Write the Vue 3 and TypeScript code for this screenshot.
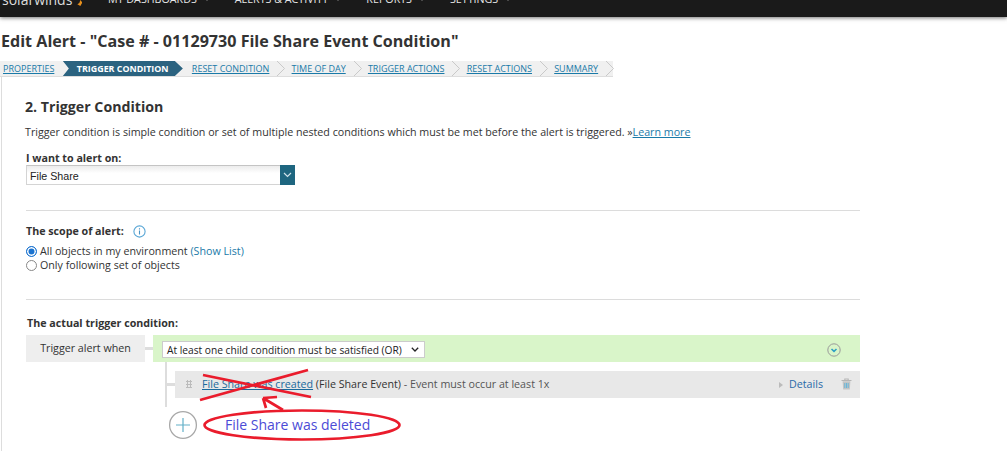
<script setup lang="ts">
const nav = ['MY DASHBOARDS', 'ALERTS & ACTIVITY', 'REPORTS', 'SETTINGS'];

interface Step {
  label: string;
  active?: boolean;
}

const steps: Step[] = [
  { label: 'PROPERTIES' },
  { label: 'TRIGGER CONDITION', active: true },
  { label: 'RESET CONDITION' },
  { label: 'TIME OF DAY' },
  { label: 'TRIGGER ACTIONS' },
  { label: 'RESET ACTIONS' },
  { label: 'SUMMARY' },
];
</script>

<template>
  <div class="page">
    <header class="topbar">
      <div class="logo">solarwinds<span class="flame"></span></div>
      <nav class="menu">
        <span v-for="item in nav" :key="item" class="menu-item">{{ item }}<i class="caret"></i></span>
      </nav>
    </header>

    <h1 class="title">Edit Alert - "Case # - 01129730 File Share Event Condition"</h1>

    <div class="steps">
      <div v-for="step in steps" :key="step.label" class="step" :class="{ active: step.active }">
        <a class="step-link">{{ step.label }}</a>
        <svg v-if="!step.active" class="chev" width="10" height="15" viewBox="0 0 10 15">
          <path d="M1 0 L8.5 7.5 L1 15" fill="none" stroke="#c9c9c9" stroke-width="1" />
        </svg>
      </div>
    </div>

    <main class="panel">
      <h2 class="heading">2. Trigger Condition</h2>
      <p class="intro">
        Trigger condition is simple condition or set of multiple nested conditions which must be met before the alert is triggered. »<a class="link underline">Learn more</a>
      </p>

      <div class="label label-first">I want to alert on:</div>
      <div class="combo">
        <span class="combo-value">File Share</span>
        <span class="combo-btn">
          <svg width="9" height="6" viewBox="0 0 9 6"><path d="M1 1 L4.5 4.5 L8 1" fill="none" stroke="#cfe3ea" stroke-width="1.2" /></svg>
        </span>
      </div>

      <hr class="rule rule-one" />

      <div class="label scope-label">
        The scope of alert:
        <svg class="info" width="13" height="13" viewBox="0 0 13 13">
          <circle cx="6.5" cy="6.5" r="5.6" fill="none" stroke="#5aa7d6" stroke-width="1.1" />
          <path d="M6.5 5.6 V9.6 M6.5 3.3 V4.5" stroke="#4a94c4" stroke-width="1.1" />
        </svg>
      </div>
      <div class="radios">
        <div class="radio-row"><span class="radio on"></span>All objects in my environment <a class="link">(Show List)</a></div>
        <div class="radio-row"><span class="radio"></span>Only following set of objects</div>
      </div>

      <hr class="rule rule-two" />

      <div class="label actual-label">The actual trigger condition:</div>
      <div class="when-row">
        <div class="when-box">Trigger alert when</div>
        <div class="connector"></div>
        <div class="green">
          <div class="or-select">
            <span>At least one child condition must be satisfied (OR)</span>
            <svg width="8" height="5" viewBox="0 0 8 5"><path d="M0.8 0.8 L4 4 L7.2 0.8" fill="none" stroke="#222" stroke-width="1.3" /></svg>
          </div>
          <svg class="collapse" width="14" height="14" viewBox="0 0 14 14">
            <circle cx="7" cy="7" r="6.2" fill="none" stroke="#999" stroke-width="1" />
            <path d="M4.5 6 L7 8.4 L9.5 6" fill="none" stroke="#2c9fc4" stroke-width="1.5" />
          </svg>
        </div>
      </div>

      <div class="children">
        <div class="child-row">
          <div class="child-stub"></div>
          <div class="child">
            <span class="grip"></span>
            <a class="link underline cond">File Share was created</a>
            <span class="cond-rest">&nbsp;(File Share Event)<span class="muted"> - Event must occur at least 1x</span></span>
            <span class="details"><i class="tri"></i><a class="link-dark">Details</a></span>
            <svg class="trash" width="11" height="12" viewBox="0 0 11 12">
              <path d="M0.5 2.5 H10.5 M3.8 2.3 V1 H7.2 V2.3" fill="none" stroke="#b5b5b5" stroke-width="1.1" />
              <path d="M1.6 3.2 H9.4 L8.8 11.5 H2.2 Z" fill="#c4c4c4" />
              <path d="M3.8 5 V10 M5.5 5 V10 M7.2 5 V10" stroke="#5fb6dc" stroke-width="0.9" />
            </svg>
          </div>
        </div>
        <div class="add-row">
          <svg width="30" height="30" viewBox="0 0 30 30">
            <circle cx="15" cy="15" r="13.4" fill="#fff" stroke="#a8a8a8" stroke-width="1.3" />
            <path d="M15 8 V22 M8 15 H22" stroke="#62b0c8" stroke-width="1.2" />
          </svg>
          <span class="note">File Share was deleted</span>
        </div>
      </div>
    </main>

    <svg class="marks" width="1007" height="451" viewBox="0 0 1007 451">
      <g fill="none" stroke="#ea1c2c" stroke-width="2.7">
        <path d="M200 400 L308 370" />
        <path d="M203 375 L311 397" />
        <path d="M283 410 L263 398 M263 398 L277 397 M263 398 L266 408" />
        <ellipse cx="302" cy="425" rx="97.5" ry="14.5" />
      </g>
    </svg>
  </div>
</template>

<style>
html, body {
  margin: 0;
  background: #fff;
}
</style>

<style scoped>
.page {
  position: relative;
  width: 1007px;
  height: 451px;
  overflow: hidden;
  background: #fff;
  font-family: "Open Sans", "Liberation Sans", sans-serif;
  font-size: 10.7px;
  color: #333;
}

.topbar {
  display: flex;
  align-items: flex-end;
  height: 17px;
  background: #1a1a1a;
  box-shadow: 0 1px 4px rgba(0, 0, 0, 0.55);
  overflow: hidden;
  color: #e6e6e6;
}

.logo {
  display: flex;
  align-items: center;
  flex: none;
  width: 108px;
  height: 20px;
  margin-bottom: 7px;
  padding-left: 2px;
  box-sizing: border-box;
  font-size: 14px;
  line-height: 20px;
  color: #ddd;
}

.flame {
  width: 5px;
  height: 6px;
  margin-left: 5px;
  margin-top: 6px;
  background: #e8901c;
  clip-path: polygon(60% 0, 100% 40%, 60% 100%, 0 70%, 40% 50%);
}

.menu {
  display: flex;
  gap: 26px;
  height: 16px;
  margin-bottom: 10px;
  font-size: 10.7px;
  line-height: 16px;
}

.menu-item {
  display: flex;
  align-items: center;
  gap: 8px;
}

.caret {
  width: 0;
  height: 0;
  margin-top: 2px;
  border-left: 2px solid transparent;
  border-right: 2px solid transparent;
  border-top: 2px solid #777;
}

.title {
  margin: 14px 0 0 1px;
  font-size: 16.1px;
  line-height: 20px;
  font-weight: 700;
  color: #333;
}

.steps {
  display: flex;
  align-items: center;
  width: 613px;
  height: 15px;
  margin-top: 10px;
  background: #f0f0f0;
  border-bottom: 1px solid #ddd;
  font-size: 9px;
}

.step {
  display: flex;
  flex: none;
  align-items: center;
  height: 15px;
  margin-right: 5.2px;
}

.step:first-child {
  padding-left: 3px;
  margin-right: 0;
}

.step-link {
  color: #1a7aa8;
  text-decoration: underline;
  white-space: nowrap;
}

.chev {
  flex: none;
  margin-left: 7px;
}

.step:first-child .chev {
  display: none;
}

.step.active {
  margin-left: 8.5px;
  margin-right: 9px;
  width: 120px;
  padding-left: 14px;
  box-sizing: border-box;
  background: #2b6380;
  font-size: 8.9px;
  clip-path: polygon(0 0, 112px 0, 120px 50%, 112px 100%, 0 100%, 6px 50%);
}

.step.active .step-link {
  color: #fff;
  font-weight: 700;
  text-decoration: none;
}

.panel {
  height: 374px;
  margin-left: 1px;
  padding: 21px 0 0 23px;
  box-sizing: border-box;
  border-left: 1px solid #ddd;
  width: 1006px;
}

.heading {
  margin: 0;
  font-size: 14.2px;
  line-height: 18px;
  font-weight: 700;
  color: #333;
}

.intro {
  margin: 8px 0 0;
  line-height: 16px;
  color: #333;
}

.link {
  color: #1a7aa8;
}

.underline {
  text-decoration: underline;
}

.link-dark {
  color: #2a6aa8;
}

.label {
  margin-left: 1px;
  font-weight: 700;
  line-height: 14px;
}

.label-first {
  margin-top: 12px;
  line-height: 13px;
}

.combo {
  display: flex;
  width: 269px;
  height: 20px;
  margin: 0 0 0 1px;
  box-sizing: border-box;
  border: 1px solid #d4d4d4;
  border-top-color: #c4c4c4;
  background: linear-gradient(#ececec, #fff 40%);
}

.combo-value {
  flex: 1;
  padding-left: 3px;
  font-family: "Liberation Sans", Arial, sans-serif;
  font-size: 10.7px;
  line-height: 20px;
  color: #222;
}

.combo-btn {
  display: flex;
  align-items: center;
  justify-content: center;
  width: 15px;
  margin: -1px -1px -1px 0;
  background: #1e6680;
}

.rule {
  width: 834px;
  height: 1px;
  margin: 0 0 0 1px;
  border: 0;
  background: #dcdcdc;
}

.rule-one {
  margin-top: 25px;
}

.scope-label {
  display: flex;
  align-items: center;
  gap: 9px;
  margin-top: 13px;
}

.radios {
  margin-top: 6px;
  margin-left: 1px;
}

.radio-row {
  display: flex;
  align-items: center;
  height: 14px;
  white-space: pre;
}

.radio {
  flex: none;
  width: 9px;
  height: 9px;
  margin-right: 3px;
  border: 1px solid #888;
  border-radius: 50%;
  background: #fff;
}

.radio.on {
  border-color: #1a73d0;
  box-shadow: inset 0 0 0 1.5px #fff;
  background: #1a73d0;
}

.rule-two {
  margin-top: 27px;
}

.actual-label {
  margin-top: 16px;
  margin-left: 2px;
}

.when-row {
  display: flex;
  align-items: stretch;
  width: 834px;
  height: 27px;
  margin: 5px 0 0 1px;
}

.when-box {
  flex: none;
  width: 119px;
  background: #eee;
  text-align: center;
  line-height: 26px;
}

.connector {
  flex: none;
  align-self: center;
  width: 8px;
  height: 3px;
  background: #ddd;
}

.green {
  display: flex;
  flex: 1;
  align-items: center;
  justify-content: space-between;
  padding: 0 19px 0 9px;
  background: #d9f5c9;
}

.or-select {
  display: flex;
  align-items: center;
  justify-content: space-between;
  width: 263px;
  height: 17px;
  margin-top: 2px;
  padding: 0 5px 0 4px;
  box-sizing: border-box;
  border: 1px solid #ccc;
  background: #fff;
  color: #222;
  font-size: 10.2px;
  white-space: nowrap;
}

.collapse {
  margin-top: 2px;
}

.children {
  margin: 0 0 0 140px;
  width: 695px;
}

.child-row {
  display: flex;
  align-items: flex-start;
  height: 45px;
  padding-top: 9px;
  box-sizing: border-box;
  border-left: 2px solid #ddd;
}

.child-stub {
  flex: none;
  width: 8px;
  height: 3px;
  margin-top: 12px;
  background: #ddd;
}

.child {
  display: flex;
  align-items: center;
  flex: 1;
  height: 27px;
  padding-bottom: 1px;
  box-sizing: border-box;
  background: #e8e8e8;
}

.grip {
  flex: none;
  width: 6px;
  height: 8px;
  margin-left: 11px;
  margin-right: 10px;
  background-image: radial-gradient(circle, #bbb 1px, transparent 1.1px);
  background-size: 3px 3px;
}

.cond {
  color: #1a6a9c;
}

.cond-rest {
  color: #333;
  white-space: pre;
}

.muted {
  color: #555;
}

.details {
  display: flex;
  align-items: center;
  gap: 6px;
  margin-left: auto;
}

.tri {
  width: 0;
  height: 0;
  margin-top: 1px;
  border-top: 3.5px solid transparent;
  border-bottom: 3.5px solid transparent;
  border-left: 4px solid #bbb;
}

.trash {
  flex: none;
  margin: 0 8px 0 18px;
}

.add-row {
  display: flex;
  align-items: center;
  height: 30px;
  margin-left: 3px;
  margin-top: 3px;
}

.note {
  margin-left: 27px;
  font-size: 14px;
  line-height: 20px;
  color: #4b4bd6;
}

.marks {
  position: absolute;
  left: 0;
  top: 0;
  pointer-events: none;
}
</style>
